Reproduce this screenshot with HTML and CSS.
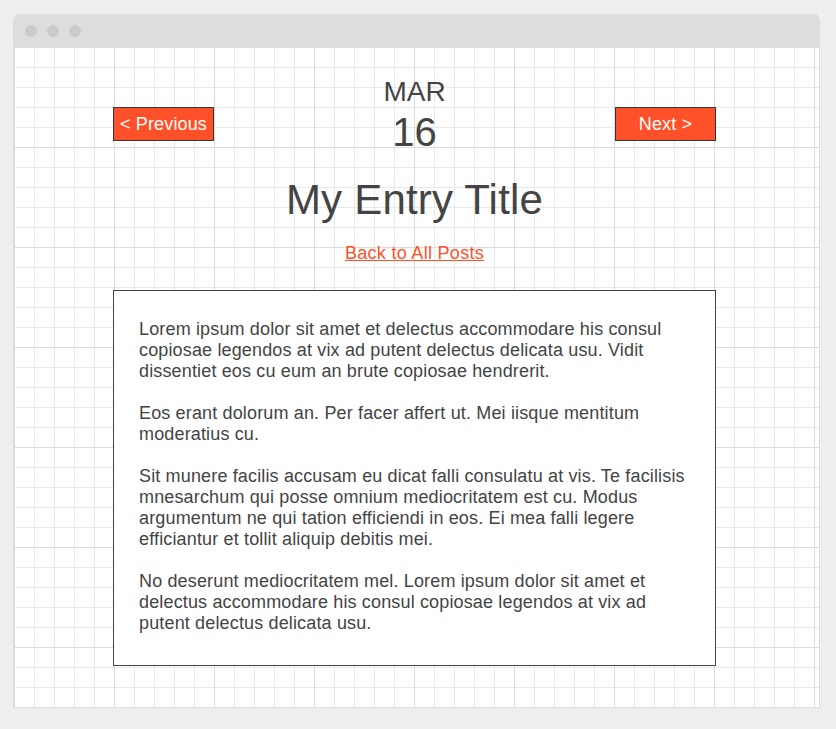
FILE: index.html
```html
<!DOCTYPE html>
<html lang="en">
<head>
<meta charset="utf-8">
<title>My Entry Title</title>
<link rel="stylesheet" href="styles.css">
</head>
<body>
<div class="window">
  <div class="titlebar">
    <span class="dot"></span><span class="dot"></span><span class="dot"></span>
  </div>
  <div class="canvas">
    <div class="column">
      <div class="header">
        <a class="btn" href="#">&lt; Previous</a>
        <div class="date">
          <div class="month">MAR</div>
          <div class="day">16</div>
        </div>
        <a class="btn" href="#">Next &gt;</a>
      </div>
      <h1 class="title">My Entry Title</h1>
      <div class="back"><a href="#">Back to All Posts</a></div>
      <div class="entry">
        <p>Lorem ipsum dolor sit amet et delectus accommodare his consul copiosae legendos at vix ad putent delectus delicata usu. Vidit dissentiet eos cu eum an brute copiosae hendrerit.</p>
        <p>Eos erant dolorum an. Per facer affert ut. Mei iisque mentitum moderatius cu.</p>
        <p>Sit munere facilis accusam eu dicat falli consulatu at vis. Te facilisis mnesarchum qui posse omnium mediocritatem est cu. Modus argumentum ne qui tation efficiendi in eos. Ei mea falli legere efficiantur et tollit aliquip debitis mei.</p>
        <p>No deserunt mediocritatem mel. Lorem ipsum dolor sit amet et delectus accommodare his consul copiosae legendos at vix ad putent delectus delicata usu.</p>
      </div>
    </div>
  </div>
</div>
</body>
</html>
```

FILE: styles.css
```css
html, body {
  margin: 0;
  padding: 0;
  background: #eeeeee;
  height: 100%;
}

body {
  font-family: "Liberation Sans", Arial, sans-serif;
  color: #444444;
}

.window {
  margin: 14px 0 0 13px;
  width: 807px;
  box-sizing: border-box;
  border: 1px solid #dddddd;
  border-top: none;
  border-radius: 6px 6px 0 0;
  overflow: hidden;
}

.titlebar {
  height: 33px;
  background: #dddddd;
  display: flex;
  align-items: center;
  gap: 10px;
  padding-left: 12px;
  margin: 0 -1px;
}

.dot {
  width: 12px;
  height: 12px;
  border-radius: 50%;
  background: #cbcbcb;
}

.canvas {
  height: 660px;
  box-sizing: border-box;
  padding-top: 29px;
  background-color: #ffffff;
  background-image:
    linear-gradient(#dcdcdc 1px, transparent 1px),
    linear-gradient(90deg, #dcdcdc 1px, transparent 1px),
    linear-gradient(#e9e9e9 1px, transparent 1px),
    linear-gradient(90deg, #e9e9e9 1px, transparent 1px);
  background-size: 100px 100px, 100px 100px, 20px 20px, 20px 20px;
}

.column {
  width: 603px;
  margin-left: 99px;
}

.header {
  display: flex;
  justify-content: space-between;
  align-items: flex-start;
}

.btn {
  display: block;
  width: 101px;
  box-sizing: border-box;
  margin-top: 31px;
  padding: 6px 0;
  background: #ff5129;
  border: 1px solid #333333;
  color: #ffffff;
  font-size: 18px;
  line-height: 20px;
  letter-spacing: 0.15px;
  text-align: center;
  text-decoration: none;
}

.date {
  text-align: center;
  color: #444444;
}

.month {
  font-size: 28px;
  line-height: 32px;
}

.day {
  font-size: 40px;
  line-height: 44px;
  margin-top: 2px;
}

.title {
  margin: 22px 0 0;
  font-size: 42px;
  line-height: 48px;
  font-weight: normal;
  letter-spacing: 0.2px;
  text-align: center;
  color: #444444;
}

.back {
  margin-top: 19px;
  text-align: center;
  font-size: 18px;
  line-height: 21px;
  letter-spacing: 0.3px;
}

.back a {
  color: #ff5129;
  text-decoration: underline;
}

.entry {
  margin-top: 26px;
  box-sizing: border-box;
  border: 1px solid #444444;
  background: #ffffff;
  padding: 28px 25px 31px;
  font-size: 18px;
  line-height: 21px;
  letter-spacing: 0.15px;
  color: #444444;
}

.entry p {
  margin: 0 0 21px;
}

.entry p:last-child {
  margin-bottom: 0;
}
```
